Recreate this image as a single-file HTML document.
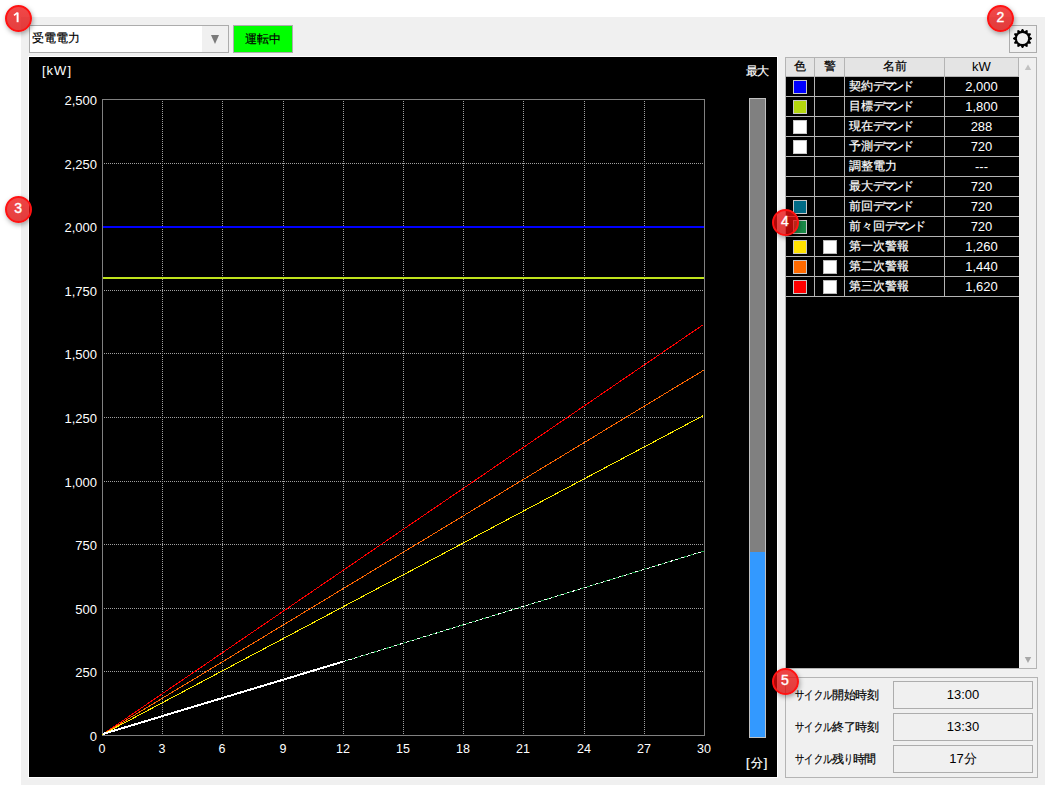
<!DOCTYPE html>
<html><head><meta charset="utf-8">
<style>
*{margin:0;padding:0;box-sizing:border-box}
html,body{width:1045px;height:785px;overflow:hidden;background:#fff;font-family:"Liberation Sans",sans-serif;font-size:12px;color:#000;-webkit-text-stroke:0.2px currentColor}
.n{-webkit-text-stroke:0}
.a{position:absolute}
#panel{left:21px;top:17px;width:1024px;height:768px;background:#f0f0f0}
#combo{left:29px;top:25px;width:200px;height:28px;border:1px solid #acacac;background:#fff}
#combo .dd{position:absolute;left:172px;top:0;width:26px;height:26px;background:#f0f0f0}
#combo .tri{position:absolute;left:9px;top:9px;width:0;height:0;border-left:4.6px solid transparent;border-right:4.6px solid transparent;border-top:9px solid #7a7a7a}
#combo .t{position:absolute;left:2px;top:5px;line-height:14px}
#run{left:233px;top:25px;width:60px;height:28px;border:1px solid #adadad;background:#00ff00;text-align:center;line-height:26px}
#gear{left:1009px;top:25px;width:28px;height:28px;border:1px solid #adadad;background:#f0f0f0}
#chart{left:28px;top:56px;width:750px;height:722px;background:#000;border:1px solid #fff}
svg.c{position:absolute;left:0;top:0}
.w{color:#fff}
.yl{position:absolute;left:40px;width:57px;text-align:right;color:#fff;line-height:14px;font-size:13px}
.xl{position:absolute;top:742px;width:40px;text-align:center;color:#fff;line-height:14px;font-size:12.5px}
#tbl{left:785px;top:57px;width:252px;height:612px;border:1px solid #b4b4b4;background:#000}
#hdr{left:786px;top:58px;width:233px;height:19px;background:#e4e4e4}
.hline{position:absolute;left:786px;width:233px;height:1px;background:#b4b4b4;margin-top:0}
.vl{position:absolute;width:1px;background:#b4b4b4}
#sb{left:1019px;top:58px;width:17px;height:610px;background:#f0f0f0}
.sw{position:absolute;left:793px;width:14px;height:14px;border:1px solid #c8c8c8}
.ck{position:absolute;left:823px;width:14px;height:14px;border:1px solid #b8b8b8;background:#fff}
.nm{position:absolute;left:849px;color:#fff;line-height:18px}
.kw{position:absolute;left:945px;width:73px;text-align:center;color:#fff;line-height:18px;font-size:13px}
.hd{position:absolute;top:57px;line-height:18px;text-align:center}
#grp{left:785px;top:677px;width:253px;height:101px;border:1px solid #b4b4b4}
.lb{position:absolute;left:795px;line-height:14px}
.vb{position:absolute;left:893px;width:140px;height:28px;border:1px solid #adadad;text-align:center;line-height:26px;font-size:13px}
.badge{position:absolute;width:27px;height:27px;border-radius:50%;background:linear-gradient(rgba(238,16,16,.77),rgba(220,6,6,.77));border:2px solid #ff1212;color:#fff;font-size:14px;-webkit-text-stroke:0.4px #fff;text-align:center;line-height:21px;box-shadow:1px 2px 5px rgba(0,0,0,.35)}
</style></head><body>
<div id="panel" class="a"></div>
<div id="combo" class="a"><div class="t">受電電力</div><div class="dd"><div class="tri"></div></div></div>
<div id="run" class="a">運転中</div>
<div id="gear" class="a"></div>
<div id="chart" class="a"></div>
<svg class="c" width="1045" height="785" shape-rendering="crispEdges">
<line x1="162.5" y1="101" x2="162.5" y2="735" stroke="#a0a0a0" stroke-dasharray="1 1"/>
<line x1="222.5" y1="101" x2="222.5" y2="735" stroke="#a0a0a0" stroke-dasharray="1 1"/>
<line x1="283.5" y1="101" x2="283.5" y2="735" stroke="#a0a0a0" stroke-dasharray="1 1"/>
<line x1="343.5" y1="101" x2="343.5" y2="735" stroke="#a0a0a0" stroke-dasharray="1 1"/>
<line x1="403.5" y1="101" x2="403.5" y2="735" stroke="#a0a0a0" stroke-dasharray="1 1"/>
<line x1="463.5" y1="101" x2="463.5" y2="735" stroke="#a0a0a0" stroke-dasharray="1 1"/>
<line x1="523.5" y1="101" x2="523.5" y2="735" stroke="#a0a0a0" stroke-dasharray="1 1"/>
<line x1="584.5" y1="101" x2="584.5" y2="735" stroke="#a0a0a0" stroke-dasharray="1 1"/>
<line x1="644.5" y1="101" x2="644.5" y2="735" stroke="#a0a0a0" stroke-dasharray="1 1"/>
<line x1="104" y1="671.5" x2="704" y2="671.5" stroke="#a0a0a0" stroke-dasharray="1 1"/>
<line x1="104" y1="608.5" x2="704" y2="608.5" stroke="#a0a0a0" stroke-dasharray="1 1"/>
<line x1="104" y1="544.5" x2="704" y2="544.5" stroke="#a0a0a0" stroke-dasharray="1 1"/>
<line x1="104" y1="481.5" x2="704" y2="481.5" stroke="#a0a0a0" stroke-dasharray="1 1"/>
<line x1="104" y1="417.5" x2="704" y2="417.5" stroke="#a0a0a0" stroke-dasharray="1 1"/>
<line x1="104" y1="353.5" x2="704" y2="353.5" stroke="#a0a0a0" stroke-dasharray="1 1"/>
<line x1="104" y1="290.5" x2="704" y2="290.5" stroke="#a0a0a0" stroke-dasharray="1 1"/>
<line x1="104" y1="226.5" x2="704" y2="226.5" stroke="#a0a0a0" stroke-dasharray="1 1"/>
<line x1="104" y1="163.5" x2="704" y2="163.5" stroke="#a0a0a0" stroke-dasharray="1 1"/>
<rect x="102.5" y="99.5" width="602" height="636" fill="none" stroke="#808080"/>
<rect x="103" y="226" width="601" height="2" fill="#0000ff"/>
<rect x="103" y="277" width="601" height="2" fill="#bfe31c"/>
<line x1="102.5" y1="734.5" x2="703.5" y2="324.5" stroke="#ff0000" stroke-width="1"/>
<line x1="102.5" y1="734.5" x2="703.5" y2="370.3" stroke="#ff6600" stroke-width="1"/>
<line x1="102.5" y1="734.5" x2="703.5" y2="415.5" stroke="#ffee00" stroke-width="1"/>
<line x1="103" y1="734" x2="342.8" y2="661.7" stroke="#ffffff" stroke-width="2"/>
<line x1="342.8" y1="661.7" x2="703.5" y2="551.2" stroke="#1a9a44" stroke-width="1"/>
<line x1="342.8" y1="661.7" x2="703.5" y2="551.2" stroke="#ffffff" stroke-width="1" stroke-dasharray="3 3"/>
<rect x="749.5" y="98.5" width="16" height="639" fill="#808080" stroke="#c0c0c0"/>
<rect x="750" y="552" width="15" height="185" fill="#3399ff"/>
</svg>
<div class="a w n" style="left:42px;top:64px;line-height:14px;font-size:13px;letter-spacing:1px">[kW]</div>
<div class="a w" style="left:746px;top:64px;line-height:14px;letter-spacing:-1px">最大</div>
<div class="a w" style="left:746px;top:756px;line-height:14px;letter-spacing:1px"><span style="font-size:13px">[</span>分<span style="font-size:13px">]</span></div>
<div class="yl n" style="top:730px">0</div><div class="yl n" style="top:666px">250</div><div class="yl n" style="top:603px">500</div><div class="yl n" style="top:539px">750</div><div class="yl n" style="top:476px">1,000</div><div class="yl n" style="top:412px">1,250</div><div class="yl n" style="top:348px">1,500</div><div class="yl n" style="top:285px">1,750</div><div class="yl n" style="top:221px">2,000</div><div class="yl n" style="top:158px">2,250</div><div class="yl n" style="top:94px">2,500</div>
<div class="xl n" style="left:82px">0</div><div class="xl n" style="left:142px">3</div><div class="xl n" style="left:202px">6</div><div class="xl n" style="left:263px">9</div><div class="xl n" style="left:323px">12</div><div class="xl n" style="left:383px">15</div><div class="xl n" style="left:443px">18</div><div class="xl n" style="left:503px">21</div><div class="xl n" style="left:564px">24</div><div class="xl n" style="left:624px">27</div><div class="xl n" style="left:684px">30</div>
<div id="tbl" class="a"></div>
<div id="hdr" class="a"></div>
<div id="sb" class="a"></div>
<div class="hline" style="top:76px"></div>
<div class="vl" style="left:814px;top:58px;height:239px"></div>
<div class="vl" style="left:844px;top:58px;height:239px"></div>
<div class="vl" style="left:944px;top:58px;height:239px"></div>
<div class="vl" style="left:1018px;top:58px;height:19px"></div>
<div class="hd" style="left:786px;width:28px">色</div>
<div class="hd" style="left:815px;width:29px">警</div>
<div class="hd" style="left:845px;width:99px">名前</div>
<div class="hd n" style="left:945px;width:73px;top:58px;font-size:13px">kW</div>
<svg class="c" width="1045" height="785">
<path d="M1028 64.5 L1031.2 70 L1024.8 70 Z" fill="#c2c2c2"/>
<path d="M1028 663 L1031.2 657 L1024.8 657 Z" fill="#a8a8a8"/>
<path d="M1020.60 31.35 L1021.93 29.02 L1023.07 29.02 L1024.40 31.35 L1024.43 31.36 L1026.75 30.00 L1027.73 30.57 L1027.72 33.26 L1027.74 33.28 L1030.43 33.27 L1031.00 34.25 L1029.64 36.57 L1029.65 36.60 L1031.98 37.93 L1031.98 39.07 L1029.65 40.40 L1029.64 40.43 L1031.00 42.75 L1030.43 43.73 L1027.74 43.72 L1027.72 43.74 L1027.73 46.43 L1026.75 47.00 L1024.43 45.64 L1024.40 45.65 L1023.07 47.98 L1021.93 47.98 L1020.60 45.65 L1020.57 45.64 L1018.25 47.00 L1017.27 46.43 L1017.28 43.74 L1017.26 43.72 L1014.57 43.73 L1014.00 42.75 L1015.36 40.43 L1015.35 40.40 L1013.02 39.07 L1013.02 37.93 L1015.35 36.60 L1015.36 36.57 L1014.00 34.25 L1014.57 33.27 L1017.26 33.28 L1017.28 33.26 L1017.27 30.57 L1018.25 30.00 L1020.57 31.36 Z" fill="#000"/><circle cx="1022.5" cy="38.5" r="5.6" fill="#f0f0f0"/>
</svg>
<div class="hline" style="top:96px"></div><div class="sw" style="top:80px;background:#0000ff"></div><div class="nm" style="top:77px">契約<span style="letter-spacing:-2.5px">デマンド</span></div><div class="kw n" style="top:78px">2,000</div><div class="hline" style="top:116px"></div><div class="sw" style="top:100px;background:#b5d80f"></div><div class="nm" style="top:97px">目標<span style="letter-spacing:-2.5px">デマンド</span></div><div class="kw n" style="top:98px">1,800</div><div class="hline" style="top:136px"></div><div class="sw" style="top:120px;background:#ffffff"></div><div class="nm" style="top:117px">現在<span style="letter-spacing:-2.5px">デマンド</span></div><div class="kw n" style="top:118px">288</div><div class="hline" style="top:156px"></div><div class="sw" style="top:140px;background:#ffffff"></div><div class="nm" style="top:137px">予測<span style="letter-spacing:-2.5px">デマンド</span></div><div class="kw n" style="top:138px">720</div><div class="hline" style="top:176px"></div><div class="nm" style="top:157px">調整電力</div><div class="kw n" style="top:158px">---</div><div class="hline" style="top:196px"></div><div class="nm" style="top:177px">最大<span style="letter-spacing:-2.5px">デマンド</span></div><div class="kw n" style="top:178px">720</div><div class="hline" style="top:216px"></div><div class="sw" style="top:200px;background:#006b86"></div><div class="nm" style="top:197px">前回<span style="letter-spacing:-2.5px">デマンド</span></div><div class="kw n" style="top:198px">720</div><div class="hline" style="top:236px"></div><div class="sw" style="top:220px;background:#1a8a48"></div><div class="nm" style="top:217px">前々回<span style="letter-spacing:-2.5px">デマンド</span></div><div class="kw n" style="top:218px">720</div><div class="hline" style="top:256px"></div><div class="sw" style="top:240px;background:#ffe100"></div><div class="ck" style="top:240px"></div><div class="nm" style="top:237px">第一次警報</div><div class="kw n" style="top:238px">1,260</div><div class="hline" style="top:276px"></div><div class="sw" style="top:260px;background:#ff6a00"></div><div class="ck" style="top:260px"></div><div class="nm" style="top:257px">第二次警報</div><div class="kw n" style="top:258px">1,440</div><div class="hline" style="top:296px"></div><div class="sw" style="top:280px;background:#ff0000"></div><div class="ck" style="top:280px"></div><div class="nm" style="top:277px">第三次警報</div><div class="kw n" style="top:278px">1,620</div>
<div id="grp" class="a"></div>
<div class="lb" style="top:688px"><span style="display:inline-block;width:37px;white-space:nowrap"><span style="display:inline-block;transform:scaleX(0.771);transform-origin:0 0">サイクル</span></span><span style="letter-spacing:-0.4px">開始時刻</span></div>
<div class="lb" style="top:720px"><span style="display:inline-block;width:37px;white-space:nowrap"><span style="display:inline-block;transform:scaleX(0.771);transform-origin:0 0">サイクル</span></span><span style="letter-spacing:-0.4px">終了時刻</span></div>
<div class="lb" style="top:752px"><span style="display:inline-block;width:37px;white-space:nowrap"><span style="display:inline-block;transform:scaleX(0.771);transform-origin:0 0">サイクル</span></span><span style="letter-spacing:-0.4px">残</span><span style="display:inline-block;width:9px;white-space:nowrap"><span style="display:inline-block;transform:scaleX(0.750);transform-origin:0 0">り</span></span><span style="letter-spacing:-0.4px">時間</span></div>
<div class="vb n" style="top:681px">13:00</div>
<div class="vb n" style="top:713px">13:30</div>
<div class="vb n" style="top:745px">17分</div>
<div class="badge" style="left:4.6px;top:4.9px"></div>
<svg class="c" width="40" height="40" style="left:0;top:0"><path d="M17.6 12.6 V22.2" stroke="#fff" stroke-width="2" fill="none"/><path d="M14 15.4 L17.6 12.6" stroke="#fff" stroke-width="1.6" fill="none"/></svg>
<div class="badge" style="left:986.8px;top:4.9px">2</div>
<div class="badge" style="left:4.6px;top:195.9px">3</div>
<div class="badge" style="left:771.5px;top:208.5px;">4</div>
<div class="badge" style="left:771.5px;top:667.5px;">5</div>
</body></html>
